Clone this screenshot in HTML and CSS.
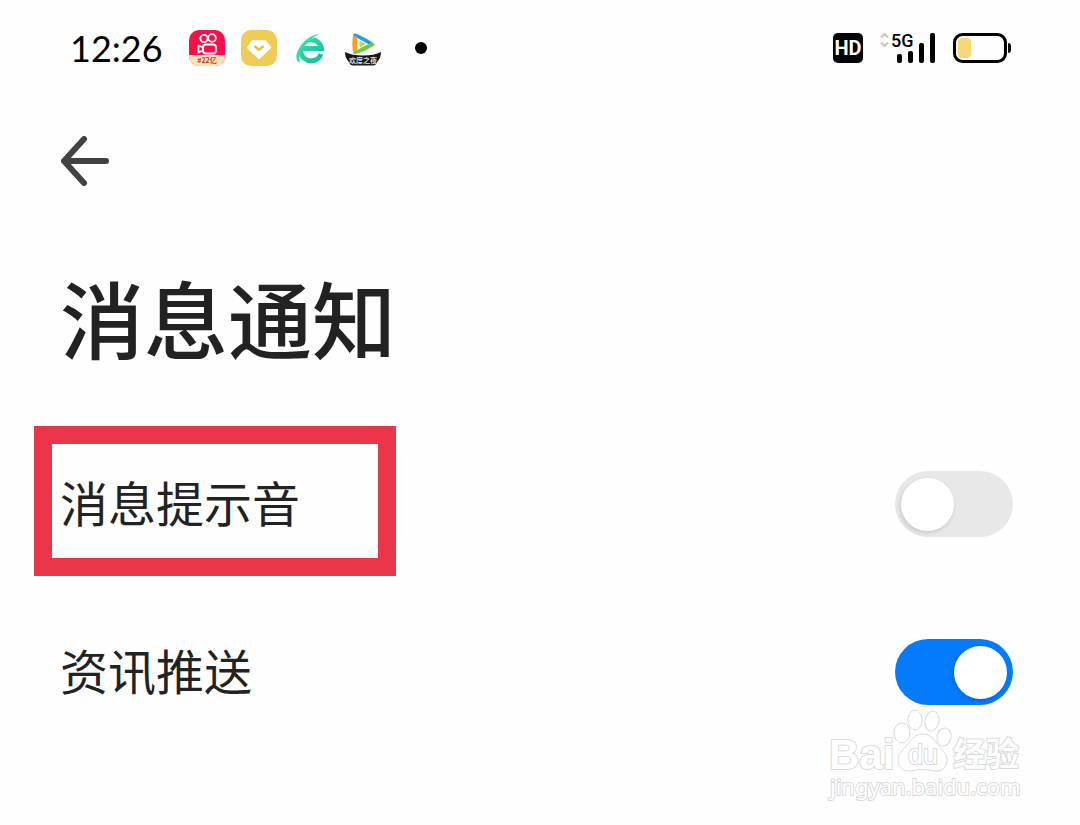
FILE: index.html
```html
<!DOCTYPE html>
<html lang="zh-CN">

<head>
    <meta charset="UTF-8">
    <meta name="viewport" content="width=device-width, initial-scale=1.0">
    <title>消息通知</title>
    <link rel="stylesheet" href="styles.css">
</head>

<body>
    <header class="status-bar">
        <div class="status-left">
            <span class="clock">12:26</span>
            <svg class="app-icon" viewBox="0 0 36 36">
                <rect width="36" height="36" rx="10" fill="#fa0f4b"/>
                <path d="M0 25h36v1a10 10 0 0 1-10 10H10A10 10 0 0 1 0 26z" fill="#fde3b5"/>
                <g fill="none" stroke="#fff" stroke-width="1.8">
                    <circle cx="15" cy="8.500" r="3.6"/>
                    <circle cx="23" cy="8" r="3.8"/>
                    <rect x="14" y="14.500" width="13" height="9" rx="3"/>
                    <path d="M14 17.500l-4.500-2v7l4.500-2z" stroke-linejoin="round"/>
                </g>
                <text class="tiny-tag" x="18" y="33" fill="#c0392b">#22亿</text>
            </svg>
            <svg class="app-icon" viewBox="0 0 36 36">
                <rect width="36" height="36" rx="10" fill="#f0cb55"/>
                <path d="M11.500 11h13l5 6.500L18 28.500 6.500 17.500z" fill="#fff" stroke="#fff" stroke-width="1.500" stroke-linejoin="round"/>
                <path d="M13.500 16l4.500 4 4.500-4" fill="none" stroke="#e6bd45" stroke-width="2.400"/>
            </svg>
            <svg class="app-icon" viewBox="0 0 36 36">
                <defs>
                    <linearGradient id="browser" x1="0" y1="0" x2="1" y2="1">
                        <stop offset="0" stop-color="#2fe0a0"/>
                        <stop offset="1" stop-color="#16bfa6"/>
                    </linearGradient>
                </defs>
                <path d="M28 24A10.500 10.500 0 1 1 28.500 18.500H10" fill="none" stroke="url(#browser)" stroke-width="5"/>
                <path d="M5 32C-2 27 11 4 27 4.500" fill="none" stroke="#fff" stroke-width="4.500"/>
                <path d="M7 32.500C-3 30 9 5 27 4c-9 3-24 17-20 28.500z" fill="#35dca5"/>
            </svg>
            <svg class="app-icon" viewBox="0 0 36 36">
                <g transform="translate(-1 3)">
                    <path d="M9 1.500q-1.500 9 0 18l4-3.500V5z" fill="#ff9c22"/>
                    <path d="M9 1.500Q10 0 13 1q9 4 16.500 9l-5.500 1.500L13 5z" fill="#249be8"/>
                    <path d="M29.500 10q2 1.500 0 3Q21 18.500 12 21q-2.500.5-3-1.500l4-3.500 11-4.500z" fill="#6fc93a"/>
                    <path d="M13 5l11 6-11 6z" fill="#fff"/>
                    <path d="M15.500 7.500l6.500 3.500-6.500 3.500z" fill="#b8dc62"/>
                </g>
                <path d="M0 22q7 3.500 18 3.500T36 22q0 6-4 10-1 3.500-4 3.500H8q-3 0-4-3.500-4-4-4-10z" fill="#171717"/>
                <text class="tiny-tag" x="18" y="33" fill="#ddd">欢度之夜</text>
            </svg>
            <span class="more-dot"></span>
        </div>
        <div class="status-right">
            <span class="hd">HD</span>
            <svg class="signal" viewBox="0 -4 56 40">
                <path d="M1 5.500L4.500 2 8 5.500M1 10.500L4.500 14 8 10.500" fill="none" stroke="#c4c4c4" stroke-width="2"/>
                <text class="network" x="11" y="15">5G</text>
                <rect x="17" y="22" width="5" height="9" rx="2"/>
                <rect x="28" y="19" width="5" height="12" rx="2"/>
                <rect x="39" y="11" width="5" height="20" rx="2"/>
                <rect x="50" y="1" width="5" height="30" rx="2"/>
            </svg>
            <svg class="battery" viewBox="0 0 58 30">
                <rect x="1.500" y="1.500" width="51" height="27" rx="8" fill="none" stroke="#000" stroke-width="3"/>
                <rect x="5" y="5" width="13" height="20" rx="4" fill="#f8d778"/>
                <path d="M55 10q3 0 3 3v4q0 3-3 3z"/>
            </svg>
        </div>
    </header>

    <main class="settings">
        <button class="back" type="button" aria-label="返回">
            <svg viewBox="0 0 50 50">
                <path d="M24 3L4 25l20 22M4 25h42" fill="none" stroke="#424242" stroke-width="6" stroke-linecap="round" stroke-linejoin="round"/>
            </svg>
        </button>
        <h1>消息通知</h1>

        <div class="row highlighted">
            <label for="sound">消息提示音</label>
            <input class="switch" type="checkbox" id="sound">
        </div>
        <div class="row">
            <label for="push">资讯推送</label>
            <input class="switch" type="checkbox" id="push" checked>
        </div>
    </main>

    <svg class="watermark" viewBox="0 0 200 100">
        <g class="outlined">
            <text class="brand" x="3" y="61">Bai</text>
            <ellipse cx="76" cy="25" rx="8" ry="10"/>
            <ellipse cx="89" cy="12" rx="7" ry="10"/>
            <ellipse cx="106" cy="13" rx="7" ry="10" transform="rotate(12 106 13)"/>
            <ellipse cx="118" cy="29" rx="7" ry="9" transform="rotate(12 118 29)"/>
            <path d="M97 26c8 0 11 6 15 11 5 6 9 9 9 15 0 8-6 12-13 11-8-2-15-2-22 0-8 1-14-3-14-11 0-6 4-9 9-15 5-6 8-11 16-11z"/>
            <text class="brand-du" x="82" y="56">du</text>
            <text class="brand-cn" x="127" y="58">经验</text>
            <text class="site" x="4" y="87">jingyan.baidu.com</text>
        </g>
    </svg>
</body>

</html>
```

FILE: styles.css
```css
* {
    box-sizing: border-box;
}

body {
    position: relative;
    min-height: 100vh;
    margin: 0;
    background-color: #fefefe;
    color: #222;
    font-family: "Liberation Sans", "Noto Sans CJK SC", sans-serif;
}

svg {
    display: block;
}

.status-bar {
    display: flex;
    justify-content: space-between;
    align-items: center;
    height: 96px;
    padding: 0 69px 0 70px;
    color: #000;
}

.status-left,
.status-right {
    display: flex;
    align-items: center;
}

.status-left {
    gap: 16px;
}

.clock {
    margin-right: 10px;
    font-family: Lato, sans-serif;
    font-size: 36px;
    line-height: 40px;
}

.app-icon {
    width: 36px;
    height: 36px;
}

.tiny-tag {
    font-family: "Noto Sans CJK SC", sans-serif;
    font-size: 7px;
    font-weight: bold;
    text-anchor: middle;
}

.more-dot {
    width: 12px;
    height: 12px;
    margin-left: 18px;
    border-radius: 50%;
    background-color: #000;
}

.status-right {
    gap: 17px;
}

.hd {
    width: 30px;
    border-radius: 5px;
    background-color: #000;
    color: #fff;
    font-family: Roboto, sans-serif;
    font-size: 20px;
    font-weight: bold;
    line-height: 30px;
    text-align: center;
}

.signal {
    width: 56px;
    height: 40px;
}

.network {
    font-family: Roboto, sans-serif;
    font-size: 18px;
    font-weight: 500;
}

.battery {
    width: 58px;
    height: 30px;
}

.settings {
    padding: 40px 67px 40px 60px;
}

.back {
    display: block;
    padding: 0;
    border: none;
    background: none;
    cursor: pointer;
}

.back svg {
    width: 50px;
    height: 50px;
}

h1 {
    margin: 71px 0 43px;
    font-family: "Noto Sans CJK SC", sans-serif;
    font-size: 84px;
    font-weight: 500;
    line-height: 120px;
}

.row {
    position: relative;
    display: flex;
    justify-content: space-between;
    align-items: center;
    height: 168px;
}

.row label {
    padding-bottom: 6px;
    font-family: "Noto Sans CJK SC", sans-serif;
    font-size: 48px;
    line-height: 72px;
}

/* red frame round the setting */
.highlighted::before {
    content: "";
    position: absolute;
    top: 6px;
    left: -26px;
    box-sizing: border-box;
    width: 362px;
    height: 150px;
    border: 18px solid #eb3549;
    pointer-events: none;
}

.switch {
    appearance: none;
    display: flex;
    align-items: center;
    width: 118px;
    height: 66px;
    margin: 0;
    padding: 0 6px;
    border-radius: 33px;
    background-color: #e8e8e8;
    cursor: pointer;
}

.switch::before {
    content: "";
    width: 53px;
    height: 53px;
    border-radius: 50%;
    background-color: #fff;
    box-shadow: -1px 2px 4px rgba(0, 0, 0, 0.15);
}

.switch:checked {
    justify-content: flex-end;
    background-color: #047bfd;
}

.watermark {
    position: absolute;
    right: 54px;
    bottom: 17px;
    width: 200px;
    height: 100px;
    pointer-events: none;
}

.outlined {
    fill: #fff;
    stroke: #dadada;
    stroke-width: 1px;
}

.outlined text {
    stroke-width: 2px;
    paint-order: stroke;
}

.brand {
    font-size: 42px;
    font-weight: bold;
}

.brand-du {
    font-size: 27px;
}

.brand-cn {
    font-family: "Noto Sans CJK SC", sans-serif;
    font-size: 33px;
    font-weight: bold;
}

.site {
    font-family: "Noto Sans", sans-serif;
    font-size: 22px;
}
```
